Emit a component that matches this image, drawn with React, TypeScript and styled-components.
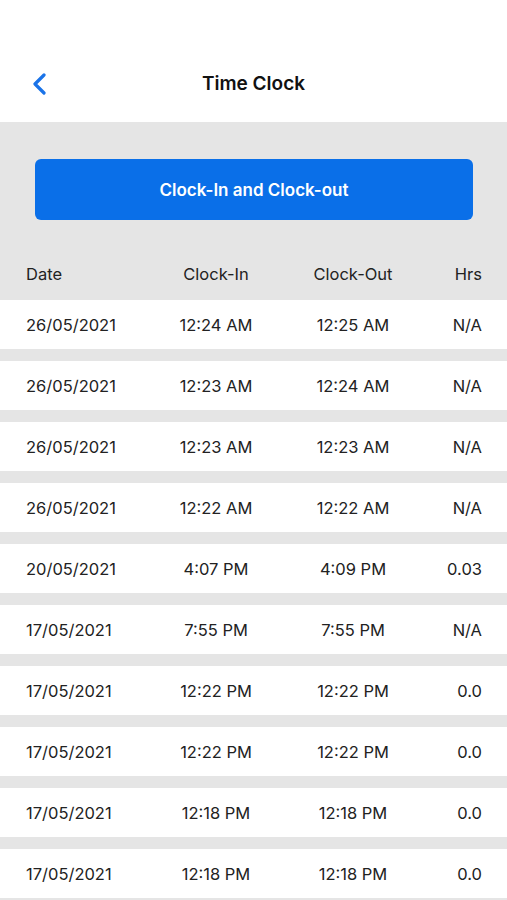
import styled, {createGlobalStyle} from "styled-components";
import React from "react";

const GlobalStyle = createGlobalStyle`
  html, body {
    margin: 0;
    padding: 0;
    background: #e5e5e5;
  }
  body {
    font-family: Inter, "Liberation Sans", sans-serif;
    -webkit-font-smoothing: antialiased;
  }
`;

type Entry = { date: string; clockIn: string; clockOut: string; hrs: string };

const entries: Entry[] = [
    {date: "26/05/2021", clockIn: "12:24 AM", clockOut: "12:25 AM", hrs: "N/A"},
    {date: "26/05/2021", clockIn: "12:23 AM", clockOut: "12:24 AM", hrs: "N/A"},
    {date: "26/05/2021", clockIn: "12:23 AM", clockOut: "12:23 AM", hrs: "N/A"},
    {date: "26/05/2021", clockIn: "12:22 AM", clockOut: "12:22 AM", hrs: "N/A"},
    {date: "20/05/2021", clockIn: "4:07 PM", clockOut: "4:09 PM", hrs: "0.03"},
    {date: "17/05/2021", clockIn: "7:55 PM", clockOut: "7:55 PM", hrs: "N/A"},
    {date: "17/05/2021", clockIn: "12:22 PM", clockOut: "12:22 PM", hrs: "0.0"},
    {date: "17/05/2021", clockIn: "12:22 PM", clockOut: "12:22 PM", hrs: "0.0"},
    {date: "17/05/2021", clockIn: "12:18 PM", clockOut: "12:18 PM", hrs: "0.0"},
    {date: "17/05/2021", clockIn: "12:18 PM", clockOut: "12:18 PM", hrs: "0.0"},
];

function App() {
    return (
        <Page>
            <GlobalStyle/>
            <NavBar>
                <BackButton aria-label="Back">
                    <svg width="16" height="22" viewBox="0 0 16 22" fill="none">
                        <path d="M12 2L3 11L12 20" stroke="#1a73e8" strokeWidth="3.2"
                              strokeLinecap="round" strokeLinejoin="round"/>
                    </svg>
                </BackButton>
                <Title>Time Clock</Title>
            </NavBar>
            <Content>
                <ActionButton>Clock-In and Clock-out</ActionButton>
                <Row $header>
                    <Cell>Date</Cell>
                    <Cell $align="center">Clock-In</Cell>
                    <Cell $align="center">Clock-Out</Cell>
                    <Cell $align="right">Hrs</Cell>
                </Row>
                <List>
                    {entries.map((e, i) => <Row key={i}>
                        <Cell>{e.date}</Cell>
                        <Cell $align="center">{e.clockIn}</Cell>
                        <Cell $align="center">{e.clockOut}</Cell>
                        <Cell $align="right">{e.hrs}</Cell>
                    </Row>)}
                </List>
            </Content>
        </Page>
    );
}

const Page = styled.div`
  width: 507px;
  min-height: 900px;
  background: #e5e5e5;
`;
const NavBar = styled.header`
  height: 122px;
  background: #fff;
  position: relative;
  display: flex;
  align-items: flex-end;
  justify-content: center;
  padding-bottom: 26px;
  box-sizing: border-box;
`;
const BackButton = styled.button`
  position: absolute;
  left: 32px;
  top: 73px;
  border: none;
  background: none;
  padding: 0;
  display: flex;
`;
const Title = styled.h1`
  margin: 0;
  font-size: 19px;
  line-height: 24px;
  font-weight: 600;
  color: #111;
`;
const Content = styled.main`
  padding-top: 37px;
`;
const ActionButton = styled.button`
  display: block;
  width: 438px;
  height: 61px;
  margin: 0 auto 0 35px;
  border: none;
  border-radius: 6px;
  background: #0a6fe8;
  color: #fff;
  font-family: inherit;
  font-size: 17px;
  font-weight: 600;
`;
const List = styled.div`
  display: flex;
  flex-direction: column;
  gap: 12px;
`;
const Row = styled.div<{ $header?: boolean }>`
  display: grid;
  grid-template-columns: 130px 120px 154px 1fr;
  align-items: center;
  padding: 0 25px 0 26px;
  height: ${p => p.$header ? "80px" : "49px"};
  background: ${p => p.$header ? "transparent" : "#fff"};
  color: #222;
  font-size: 16.5px;
  ${p => p.$header && `
    align-items: end;
    padding-bottom: 16px;
    box-sizing: border-box;
  `}
`;
const Cell = styled.div<{ $align?: "left" | "center" | "right" }>`
  text-align: ${p => p.$align || "left"};
  white-space: nowrap;
`;

export default App;
